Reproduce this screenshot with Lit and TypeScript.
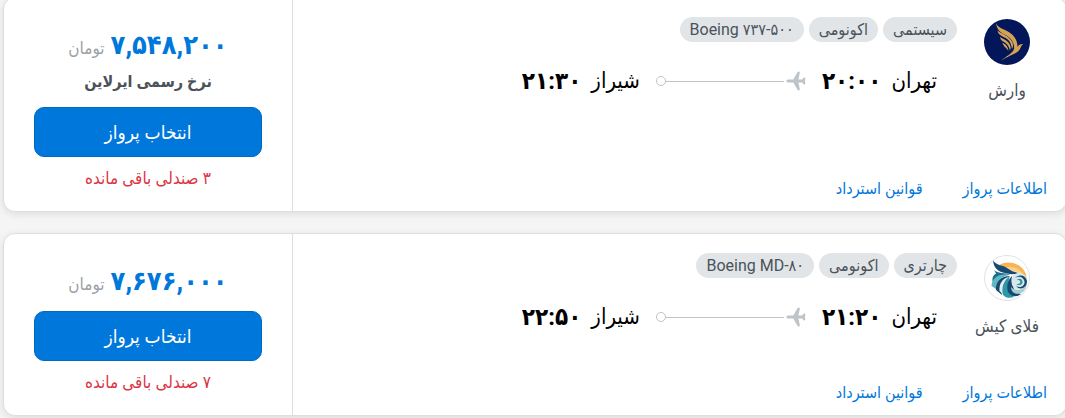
import { LitElement, html, css, svg, nothing } from "lit";
import { customElement, property } from "lit/decorators.js";

interface Flight {
  airline: string;
  logo: "varesh" | "flykish";
  tags: string[];
  from: string;
  departure: string;
  to: string;
  arrival: string;
  price: string;
  note?: string;
  seats: string;
}

const flights: Flight[] = [
  {
    airline: "وارش",
    logo: "varesh",
    tags: ["سیستمی", "اکونومی", "Boeing ۷۳۷-۵۰۰"],
    from: "تهران",
    departure: "۲۰:۰۰",
    to: "شیراز",
    arrival: "۲۱:۳۰",
    price: "۷,۵۴۸,۲۰۰",
    note: "نرخ رسمی ایرلاین",
    seats: "۳ صندلی باقی مانده",
  },
  {
    airline: "فلای کیش",
    logo: "flykish",
    tags: ["چارتری", "اکونومی", "Boeing MD-۸۰"],
    from: "تهران",
    departure: "۲۱:۲۰",
    to: "شیراز",
    arrival: "۲۲:۵۰",
    price: "۷,۶۷۶,۰۰۰",
    seats: "۷ صندلی باقی مانده",
  },
];

const logos = {
  varesh: svg`
    <circle cx="23" cy="23" r="23" fill="#03165a"/>
    <g fill="#d3a254">
      <path d="M12 3.500C13 8 18 9.500 23 12C29 15 33.500 20 33.500 28C35 25.500 36.500 24.800 39.300 25C36.500 27 37 29.500 34.500 32C30 36 23 37 17 42C21 37.500 28.500 35 30 30C31 25 27 19 22.500 16.500C17 14 12.500 11 12 3.500Z"/>
      <path d="M13.500 11.500C17 15 25 16 28.500 23.500C29.300 26 29.200 28 28 30C27 22.500 24 20 20.500 18.500C16.500 16.500 14 15 13.500 11.500Z"/>
      <path d="M16 18C19 20.500 24 20.500 26.400 27C26.800 28.500 26.500 30 26 31.500C24.500 26 22.500 24.500 20 23C17.500 21.500 16.300 20.500 16 18Z"/>
      <path d="M18.500 23.500C21 25.500 24 26.500 24.400 32C23 29 19 27.500 18.500 23.500Z"/>
    </g>`,
  flykish: svg`
    <circle cx="23" cy="23" r="22.500" fill="#fff" stroke="#dfe2e4"/>
    <path d="M15 10C22 6 31 7 37 12C41 15.500 43 20 42.500 24C39 17 32 15 24 15.500C20 15 17 13 15 10Z" fill="#f9b354"/>
    <path d="M20 13C29 10 38 14 42 23C37 17 30 15 22 17Z" fill="#fbcf86"/>
    <path d="M9 5.500C13 11 19 10 23 13C27 16 30 17 34.500 18C29 20 25 19 21 18C15 17 10 14 9 5.500Z" fill="#174a73"/>
    <path d="M10 15C14 19 20 17 27 20C20 19 13 21 8.500 27C8 23 9 20 12 18.500Z" fill="#1c6f8a"/>
    <path d="M7.500 31C8 23 15 18 25 20C16 22 12 27 12 34Z" fill="#5db8c4"/>
    <path d="M12 35C11 27 17 21 26 21C19 25 16 31 18 40Z" fill="#174a73"/>
    <path d="M15.500 36C15 29 18 24 24 22C20 27 19 34 22 42Z" fill="#e4edf0"/>
    <path d="M19 40C17 32 20 25 26 21C23 28 24 36 30 42C26 43.500 22 43 19 40Z" fill="#2c98a6"/>
    <path d="M24 37C22 30 24 25 28 21C27 30 30 37 37 39C33 42.500 27 42 24 37Z" fill="#174a73"/>
    <path d="M27 32C27 38 33 41 39 37C42 34 43.500 30 43 26C40 35 32 37 27 32Z" fill="#a5cdd4"/>
    <path d="M28 22C31 17 39 17 42 22C45 28 41 34 36 35C30 35 26 30 28 22Z" fill="#d9e7ea"/>
    <path d="M32 31C38 34 42 29 40 25C38 21 34 21 31 23C35 18.500 42 20 43 26C43 33 36 36 32 31Z" fill="#174a73"/>
    <path d="M33 25C35 22.500 39 24 38.500 27.500C38 30.500 34 31 32.500 29C35 29.500 37 28 36 26C35.500 25 34 24.800 33 25Z" fill="#2c98a6"/>`,
};

@customElement("flight-card")
class FlightCard extends LitElement {
  @property({ attribute: false }) flight!: Flight;

  static styles = css`
    :host {
      display: flex;
      border: 1px solid #dedede;
      border-radius: 12px;
      background: #fff;
      box-shadow: 0 2px 8px rgba(0, 0, 0, 0.1);
      overflow: hidden;
    }
    .main {
      flex: 1;
      display: flex;
      flex-direction: column;
      justify-content: space-between;
      padding: 19px 9px 10px 20px;
    }
    .info {
      display: flex;
    }
    .airline {
      width: 100px;
      display: flex;
      flex-direction: column;
      align-items: center;
      gap: 13px;
      padding-top: 2px;
      font-size: 17px;
      line-height: 24px;
      color: #4b5259;
    }
    .logo {
      width: 46px;
      height: 46px;
    }
    .details {
      flex: 1;
    }
    .tags {
      display: flex;
      gap: 5px;
      margin: 0;
      padding: 0;
      list-style: none;
    }
    .tag {
      padding: 0 10px;
      border-radius: 13px;
      background: #e1e5e8;
      color: #4b5259;
      font-size: 16px;
      line-height: 25px;
    }
    .route {
      display: flex;
      align-items: center;
      gap: 16px;
      padding: 21px 20px 0 0;
      color: #000;
      line-height: 36px;
    }
    .stop {
      display: flex;
      align-items: center;
      gap: 10px;
    }
    .city {
      font-size: 22px;
    }
    .time {
      font-size: 24px;
      font-weight: 700;
    }
    .path {
      display: flex;
      align-items: center;
      width: 150px;
    }
    .plane {
      width: 20px;
      height: 20px;
      margin-left: 2px;
    }
    .line {
      flex: 1;
      height: 1px;
      background: #bdc4ca;
    }
    .dot {
      width: 8px;
      height: 8px;
      border: 1px solid #bdc4ca;
      border-radius: 50%;
    }
    .links {
      display: flex;
      gap: 40px;
      padding-right: 10px;
      font-size: 16px;
      line-height: 24px;
    }
    .link {
      color: #0077db;
      text-decoration: none;
    }
    .offer {
      box-sizing: border-box;
      width: 289px;
      flex: none;
      padding: 29px 30px 21px;
      border-right: 1px solid #dedede;
      text-align: center;
    }
    .price {
      display: flex;
      justify-content: center;
      align-items: baseline;
      gap: 6px;
      line-height: 36px;
    }
    .amount {
      color: #0077db;
      font-size: 27px;
      font-weight: 700;
    }
    .unit {
      color: #9aa1a7;
      font-size: 17px;
    }
    .note {
      color: #4b5259;
      font-size: 16px;
      font-weight: 700;
      line-height: 32px;
    }
    .select {
      display: block;
      width: 100%;
      height: 50px;
      margin: 9px 0;
      padding: 0;
      border: 1px solid #0069c2;
      border-radius: 10px;
      background: #0077db;
      color: #fff;
      font: inherit;
      font-size: 19px;
      cursor: pointer;
    }
    .seats {
      color: #dc3545;
      font-size: 17px;
      line-height: 24px;
    }
  `;

  render() {
    const f = this.flight;
    return html`
      <section class="main">
        <div class="info">
          <div class="airline">
            <svg class="logo" viewBox="0 0 46 46" aria-hidden="true">${logos[f.logo]}</svg>
            <span>${f.airline}</span>
          </div>
          <div class="details">
            <ul class="tags">
              ${f.tags.map((t) => html`<li class="tag" dir="auto">${t}</li>`)}
            </ul>
            <div class="route">
              <div class="stop">
                <span class="city">${f.from}</span>
                <span class="time">${f.departure}</span>
              </div>
              <div class="path">
                <svg class="plane" viewBox="0 0 20 20" aria-hidden="true">
                  <path
                    fill="#bdc4ca"
                    d="M2 8.500H7.300L11.300 1.500Q11.800.600 12.800.600Q14.200.700 13.800 1.900L12.400 8.500H16.300L17.300 7Q18 6.400 18.800 6.600Q19.500 6.900 19.300 7.600L19 10L19.300 12.400Q19.500 13.100 18.800 13.400Q18 13.600 17.300 13L16.300 11.500H12.400L13.800 18.100Q14.200 19.300 12.800 19.400Q11.800 19.400 11.300 18.500L7.300 11.500H2Q.400 11.300 .400 10Q.400 8.700 2 8.500Z"
                  />
                </svg>
                <span class="line"></span>
                <span class="dot"></span>
              </div>
              <div class="stop">
                <span class="city">${f.to}</span>
                <span class="time">${f.arrival}</span>
              </div>
            </div>
          </div>
        </div>
        <nav class="links">
          <a class="link" href="#info">اطلاعات پرواز</a>
          <a class="link" href="#refund">قوانین استرداد</a>
        </nav>
      </section>
      <aside class="offer">
        <div class="price">
          <span class="amount">${f.price}</span>
          <span class="unit">تومان</span>
        </div>
        ${f.note ? html`<div class="note">${f.note}</div>` : nothing}
        <button class="select" type="button">انتخاب پرواز</button>
        <div class="seats">${f.seats}</div>
      </aside>
    `;
  }
}

@customElement("app-root")
class AppRoot extends LitElement {
  static styles = css`
    :host {
      display: block;
      min-height: 100vh;
      overflow: hidden;
      background: #f5f5f5;
      direction: rtl;
      font-family: Roboto, "DejaVu Sans Condensed", "DejaVu Sans", sans-serif;
    }
    .results {
      display: grid;
      gap: 21px;
      margin: -3px -2px 0 3px;
    }
  `;

  render() {
    return html`
      <main class="results">
        ${flights.map((f) => html`<flight-card .flight=${f}></flight-card>`)}
      </main>
    `;
  }
}
